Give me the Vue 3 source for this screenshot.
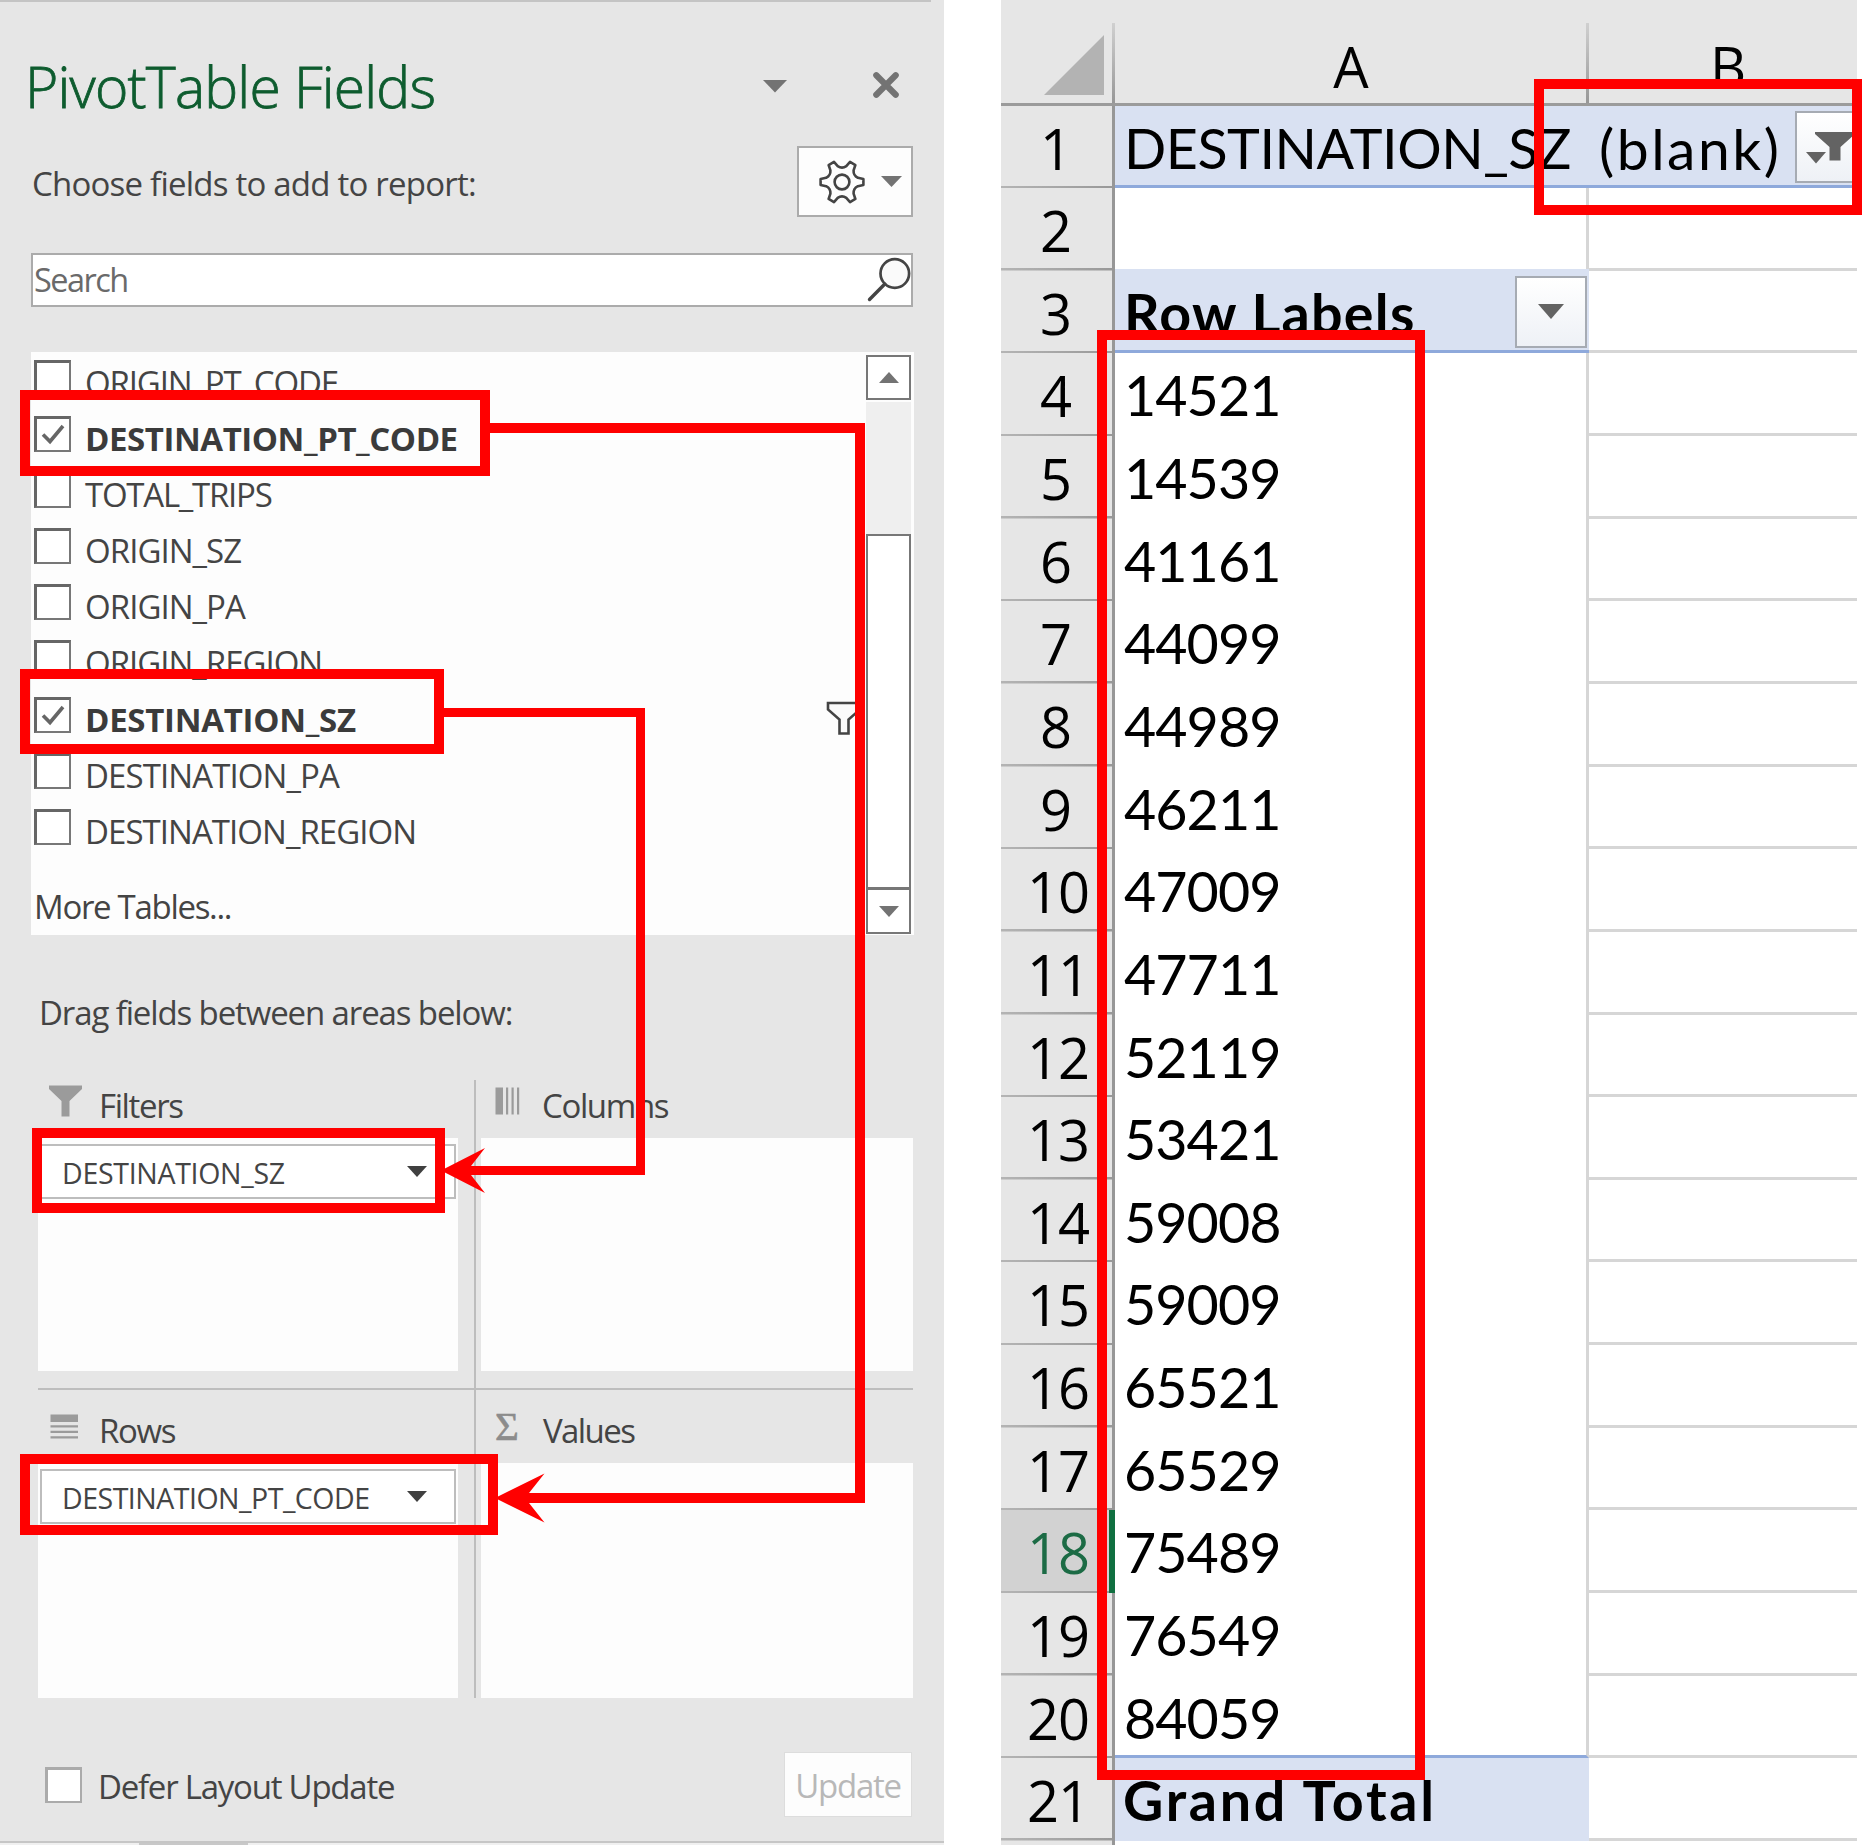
<script setup>
const fields = [
  { name: 'ORIGIN_PT_CODE', tracking: -1.15 },
  { name: 'DESTINATION_PT_CODE', tracking: -0.44, checked: true },
  { name: 'TOTAL_TRIPS', tracking: -1.25 },
  { name: 'ORIGIN_SZ', tracking: -0.95 },
  { name: 'ORIGIN_PA', tracking: -0.95 },
  { name: 'ORIGIN_REGION', tracking: -1 },
  { name: 'DESTINATION_SZ', tracking: -0.28, checked: true, filtered: true },
  { name: 'DESTINATION_PA', tracking: -0.9 },
  { name: 'DESTINATION_REGION', tracking: -0.95 },
]

const areas = [
  { key: 'filters', title: 'Filters', items: ['DESTINATION_SZ'] },
  { key: 'columns', title: 'Columns', items: [] },
  { key: 'rows', title: 'Rows', items: ['DESTINATION_PT_CODE'] },
  { key: 'values', title: 'Values', items: [] },
]

const codes = [
  14521, 14539, 41161, 44099, 44989, 46211, 47009, 47711, 52119,
  53421, 59008, 59009, 65521, 65529, 75489, 76549, 84059,
]

const sheetRows = [
  { n: 1, a: 'DESTINATION_SZ', b: '(blank)', kind: 'page' },
  { n: 2, a: '', kind: 'plain' },
  { n: 3, a: 'Row Labels', kind: 'head' },
  ...codes.map((c, i) => ({ n: i + 4, a: String(c), kind: i === codes.length - 1 ? 'last' : 'code' })),
  { n: 21, a: 'Grand Total', kind: 'total' },
]

// Six-toothed gear outline around the origin
function gearPath() {
  const tooth = [[15.9, -4.2], [21.4, -3.1], [21.4, 3.1], [15.9, 4.2]]
  const v0 = -Math.PI / 6
  const valley = (v) => `${(13 * Math.cos(v)).toFixed(2)} ${(13 * Math.sin(v)).toFixed(2)}`
  let d = ''
  for (let i = 0; i < 6; i++) {
    const t = (i * Math.PI) / 3
    const rot = ([x, y]) =>
      `${(x * Math.cos(t) - y * Math.sin(t)).toFixed(2)} ${(x * Math.sin(t) + y * Math.cos(t)).toFixed(2)}`
    d += i === 0 ? `M${rot(tooth[0])}` : `Q${valley(t + v0)} ${rot(tooth[0])}`
    d += tooth.slice(1).map((p) => `L${rot(p)}`).join('')
  }
  return `${d}Q${valley(v0)} 15.9 -4.2Z`
}
const gear = gearPath()
</script>

<template>
  <main class="stage">
    <aside class="pane">
      <header class="pane-head">
        <h1>PivotTable Fields</h1>
        <svg width="24" height="13" viewBox="0 0 24 13"><path d="M0 0H24L12 12.6Z" fill="#737373" /></svg>
        <svg class="close" width="28" height="28" viewBox="0 0 28 28"><path d="M4.3 4.3L23.7 23.7M23.7 4.3L4.3 23.7" stroke="#737373" stroke-width="6.2" stroke-linecap="round" /></svg>
      </header>

      <div class="choose">
        <span class="choose-text">Choose fields to add to report:</span>
        <button class="tools">
          <svg width="46" height="46" viewBox="-23 -23 46 46" fill="none" stroke="#444" stroke-width="2.6" stroke-linejoin="round"><path :d="gear" /><circle r="7.4" /></svg>
          <svg class="tools-caret" width="21" height="11" viewBox="0 0 21 11"><path d="M0 0H21L10.5 11Z" fill="#737373" /></svg>
        </button>
      </div>

      <div class="search">
        <span>Search</span>
        <svg width="44" height="46" viewBox="0 0 44 46"><circle cx="27.8" cy="17.5" r="14.3" fill="#fafafa" stroke="#444" stroke-width="2.7" /><path d="M17.8 28L2.5 43.5" stroke="#444" stroke-width="3.4" stroke-linecap="round" /></svg>
      </div>

      <section class="list">
        <div class="fields">
          <div v-for="f in fields" :key="f.name" class="field" :class="{ on: f.checked }">
            <span class="box">
              <svg v-if="f.checked" width="24" height="21" viewBox="0 0 24 21"><path d="M2 10.5L9 17.5L22 2" fill="none" stroke="#666" stroke-width="3.6" /></svg>
            </span>
            <span class="name" :style="{ letterSpacing: f.tracking + 'px' }">{{ f.name }}</span>
            <svg v-if="f.filtered" class="funnel" width="36" height="36" viewBox="0 0 36 36"><path d="M2 2H34V8.5L22.5 18.5V32.5H13.5V18.5L2 8.5Z" fill="#fafafa" stroke="#444" stroke-width="2.6" /></svg>
          </div>
          <div class="more">More Tables...</div>
        </div>
        <div class="scroll">
          <span class="sbtn"><svg width="20" height="11" viewBox="0 0 20 11"><path d="M0 11H20L10 0Z" fill="#737373" /></svg></span>
          <span class="track"></span>
          <span class="thumb"></span>
          <span class="sbtn down"><svg width="20" height="11" viewBox="0 0 20 11"><path d="M0 0H20L10 11Z" fill="#737373" /></svg></span>
        </div>
      </section>

      <p class="drag">Drag fields between areas below:</p>

      <section class="areas">
        <div v-for="a in areas" :key="a.key" class="area" :class="a.key">
          <div class="area-head">
            <svg v-if="a.key === 'filters'" width="34" height="34" viewBox="0 0 34 34"><path d="M0 2.5H33V6L20.5 18V33.5H12.5V18L0 6Z" fill="#9b9b9b" /></svg>
            <svg v-else-if="a.key === 'columns'" width="34" height="34" viewBox="0 0 34 34" fill="#9b9b9b"><path d="M.5 4.5H8V31.5H.5Z" /><path d="M11 4.5h2.2v27h-2.2zM16.5 4.5h2.2v27h-2.2zM22 4.5h2.2v27h-2.2z" /></svg>
            <svg v-else-if="a.key === 'rows'" width="34" height="34" viewBox="0 0 34 34" fill="#9b9b9b"><path d="M1.5 6.5h27.5v7.5h-27.5z" /><path d="M1.5 17.2h27.5v2.2h-27.5zM1.5 22.7h27.5v2.2h-27.5zM1.5 28.2h27.5v2.2h-27.5z" /></svg>
            <span v-else class="sigma">Σ</span>
            <span class="area-title">{{ a.title }}</span>
          </div>
          <div class="drop">
            <div v-for="item in a.items" :key="item" class="chip">
              <span>{{ item }}</span>
              <svg width="20" height="11" viewBox="0 0 20 11"><path d="M0 0H20L10 11Z" fill="#404040" /></svg>
            </div>
          </div>
        </div>
      </section>

      <footer class="foot">
        <span class="box light"></span>
        <span class="defer">Defer Layout Update</span>
        <button class="update">Update</button>
      </footer>
      <div class="status"><span></span></div>
    </aside>

    <section class="sheet">
      <div class="cols">
        <div class="corner"><svg width="60" height="60" viewBox="0 0 60 60"><path d="M60 0V60H0Z" fill="#b3b3b3" /></svg></div>
        <div class="col col-a">A</div>
        <div class="col col-b">B</div>
      </div>
      <div v-for="r in sheetRows" :key="r.n" class="row" :class="[r.kind, { active: r.n === 18, single: r.n < 10 }]">
        <div class="num">{{ r.n }}</div>
        <div class="cell a">
          <span>{{ r.a }}</span>
          <i v-if="r.kind === 'head'" class="dd"><svg width="26" height="15" viewBox="0 0 26 15"><path d="M0 0H26L13 15Z" fill="#636363" /></svg></i>
        </div>
        <div class="cell b">
          <span>{{ r.b }}</span>
          <i v-if="r.b" class="dd"><svg width="54" height="34" viewBox="0 0 54 34" fill="#636363"><path d="M9 2H49V4L34.5 17V30.5H23.5V17L9 4Z" /><path d="M0 22H20L10 33.5Z" /></svg></i>
        </div>
      </div>
      <div class="tail"></div>
    </section>

    <!-- Annotations drawn over both panels -->
    <svg class="marks" width="1862" height="1845" viewBox="0 0 1862 1845" fill="none" stroke="#f00" stroke-width="10">
      <rect x="25" y="395" width="460" height="76" />
      <rect x="25" y="674" width="414" height="75" />
      <rect x="37" y="1133" width="403" height="75" />
      <rect x="25" y="1459" width="468" height="71" />
      <rect x="1102" y="335" width="318" height="1440" />
      <rect x="1539" y="84" width="318" height="126" />
      <path d="M485 428H860V1498H525" />
      <path d="M439 712.5H640.5V1170.5H468" stroke-width="9" />
      <path d="M495 1498L544.5 1473.5L529 1493V1503L544.5 1522.5Z" fill="#f00" stroke="none" />
      <path d="M441 1170.5L485 1148L471 1166V1175L485 1193Z" fill="#f00" stroke="none" />
    </svg>
  </main>
</template>

<style>
body {
  margin: 0;
  background: #fff;
}
</style>

<style scoped>
* {
  box-sizing: border-box;
}
svg {
  display: block;
  flex: none;
}
.stage {
  position: relative;
  display: flex;
  gap: 57px;
  width: 1862px;
  height: 1845px;
  overflow: hidden;
  font-family: "Open Sans", "Noto Sans", sans-serif;
  font-size: 33px;
  color: #444;
  white-space: nowrap;
}
.marks {
  position: absolute;
  inset: 0;
}

/* ---- Field pane ---- */
.pane {
  display: flex;
  flex-direction: column;
  width: 944px;
  height: 1845px;
  background: linear-gradient(#c4c4c4, #c4c4c4) 0 0 / 931px 2px no-repeat, #e6e6e6;
}
.pane-head {
  display: flex;
  align-items: center;
  height: 80px;
  margin-top: 46px;
  padding: 0 44px 0 25px;
}
h1 {
  flex: 1;
  margin: 0;
  font-size: 57px;
  font-weight: 300;
  line-height: 82px;
  letter-spacing: -0.82px;
  color: #0e5c2f;
  -webkit-text-stroke: 0.8px #0e5c2f;
}
.close {
  margin-left: 85px;
  margin-top: -2px;
}
.choose {
  display: flex;
  justify-content: space-between;
  height: 71px;
  margin: 20px 31px 0 32px;
}
.choose-text {
  line-height: 75px;
  letter-spacing: -0.78px;
}
.tools {
  display: flex;
  align-items: center;
  width: 116px;
  height: 71px;
  padding: 0 0 0 20px;
  border: 2px solid #ababab;
  background: #fdfdfd;
}
.tools-caret {
  margin-left: 16px;
}
.search {
  display: flex;
  justify-content: space-between;
  height: 54px;
  margin: 36px 31px 0 31px;
  padding-left: 1px;
  border: 2px solid #ababab;
  background: #fff;
  color: #6a6a6a;
  line-height: 50px;
}
.search span {
  font-size: 32.5px;
  letter-spacing: -1.55px;
}
.search svg {
  margin-top: 1px;
}
.list {
  display: flex;
  height: 583px;
  margin: 45px 30px 0 31px;
  padding-right: 3px;
  background: #fdfdfd;
}
.fields {
  flex: 1;
  padding-top: 2px;
}
.field {
  display: flex;
  height: 56.1px;
  padding: 0 4px 0 3px;
  line-height: 57px;
}
.box {
  display: flex;
  align-items: center;
  justify-content: center;
  flex: none;
  width: 37px;
  height: 36px;
  margin: 6px 14px 0 0;
  border: 2px solid #777;
  border-top: 3px solid #666;
  border-left: 3px solid #666;
  background: #fff;
}
.field.on .name {
  font-weight: 700;
  color: #3b3b3b;
}
.funnel {
  margin: 10px 0 0 auto;
}
.more {
  height: 94px;
  padding-left: 3px;
  line-height: 96px;
  letter-spacing: -1.3px;
}
.scroll {
  display: flex;
  flex-direction: column;
  width: 45px;
  padding-top: 3px;
}
.sbtn {
  display: flex;
  align-items: center;
  justify-content: center;
  height: 45px;
  border: 2px solid #777;
  background: #fff;
}
.track {
  height: 132px;
  margin-top: 2px;
  background: #efefef;
}
.thumb {
  height: 355px;
  border: 2px solid #777;
  background: #fff;
}
.sbtn.down {
  height: 46px;
  margin-top: -1px;
}
.drag {
  margin: 53px 0 42px 39px;
  line-height: 50px;
  letter-spacing: -1.12px;
}
.areas {
  display: grid;
  grid-template-columns: 436px 439px;
  grid-template-rows: 308px 310px;
  margin-left: 38px;
}
.area {
  display: flex;
  flex-direction: column;
}
.filters,
.rows {
  padding-right: 16px;
}
.columns,
.values {
  border-left: 2px solid #bdbdbd;
  padding-left: 5px;
}
.rows,
.values {
  border-top: 2px solid #bdbdbd;
}
.area-head {
  display: flex;
  align-items: flex-end;
  height: 58px;
  padding-left: 11px;
}
.rows .area-head,
.values .area-head {
  height: 73px;
}
.columns .area-head,
.values .area-head {
  padding-left: 14px;
}
.area-head svg,
.sigma {
  margin-bottom: 21px;
}
.sigma {
  width: 34px;
  height: 34px;
  font: 41px/36px "Liberation Serif", serif;
  color: #8c8c8c;
  -webkit-text-stroke: 0.6px #8c8c8c;
}
.area-title {
  padding-left: 16px;
  line-height: 64px;
  letter-spacing: -1.37px;
}
.columns .area-title {
  padding-left: 13px;
}
.values .area-title {
  padding-left: 14px;
  letter-spacing: -1.58px;
}
.drop {
  height: 233px;
  padding: 6px 2px;
  background: #fdfdfd;
}
.rows .drop,
.values .drop {
  height: 235px;
}
.chip {
  display: flex;
  align-items: center;
  justify-content: space-between;
  height: 55px;
  padding: 0 27px 0 20px;
  border: 2px solid #bdbdbd;
  background: #fff;
  font-size: 28.5px;
  letter-spacing: -0.5px;
}
.chip span {
  padding-top: 3px;
}
.filters .chip {
  letter-spacing: -0.3px;
}
.foot {
  display: flex;
  align-items: center;
  height: 64px;
  margin: 54px 32px 0 45px;
}
.box.light {
  margin: 2px 15px 0 0;
  border-color: #ababab;
}
.defer {
  flex: 1;
  padding: 5px 0 0 1px;
  letter-spacing: -1.24px;
}
.update {
  width: 128px;
  height: 65px;
  padding: 3px 0 0;
  border: 1px solid #ddd;
  background: #fdfdfd;
  font: inherit;
  letter-spacing: -1.27px;
  color: #b8b8b8;
}
.status {
  height: 4px;
  margin-top: auto;
  border-top: 2px solid #c6c6c6;
  background: #f0f0f0;
}
.status span {
  display: block;
  width: 109px;
  height: 2px;
  margin-left: 139px;
  background: #c8c8c8;
}

/* ---- Worksheet ---- */
.sheet {
  display: flex;
  flex-direction: column;
  width: 856px;
  height: 1845px;
  overflow: hidden;
  font-size: 56px;
  color: #000;
}
.cols {
  display: flex;
  flex: none;
  height: 105.5px;
  border-bottom: 3px solid #9b9b9b;
  background: #e6e6e6;
}
.corner {
  width: 114px;
  padding: 35px 0 0 43px;
  background: linear-gradient(#d0d0d0, #979797) 100% 100% / 3px 80px no-repeat;
}
.col {
  padding-top: 29px;
  line-height: 74px;
  text-align: center;
}
.col-a {
  width: 474px;
  padding-right: 2px;
  background: linear-gradient(#d0d0d0, #979797) 100% 100% / 3px 80px no-repeat;
}
.col-b {
  width: 268px;
  padding-left: 10px;
}
.row {
  display: flex;
  flex: none;
  height: 82.65px;
}
.num {
  width: 114px;
  padding: 0 0 0 3px;
  border-right: 3px solid #979797;
  background: linear-gradient(90deg, #b4b4b4, #999) 0 100% / 100% 2.5px no-repeat, #e6e6e6;
  line-height: 84px;
  letter-spacing: -1px;
  text-align: center;
}
.single .num {
  padding: 0 2px 0 0;
}
.active .num {
  border-right: 6px solid #107040;
  padding-left: 6px;
  background-color: #d2d2d2;
  color: #1c6b45;
}
.cell {
  display: flex;
  font-family: "Lato", "Carlito", sans-serif;
  font-size: 55.6px;
  line-height: 84px;
}
.cell.a {
  width: 474px;
  padding-left: 9px;
  border-right: 3px solid #d6d6d6;
  letter-spacing: -0.95px;
}
.cell.b {
  width: 268px;
  padding-left: 10px;
  border-bottom: 3px solid #d6d6d6;
}
.page .cell {
  border-right: 0;
  border-bottom: 3px solid #8ea9db;
  background: #d9e1f2;
}
.page .a {
  letter-spacing: -0.48px;
}
.page .b {
  font-size: 57px;
  letter-spacing: 2.5px;
}
.head .a,
.total .a {
  border-right: 0;
  background: #d9e1f2;
  font-weight: 700;
}
.head .a {
  border-bottom: 3px solid #8ea9db;
  box-shadow: 0 -2px 0 #d9e1f2;
  letter-spacing: 1.27px;
}
.total .a {
  padding-left: 8px;
  letter-spacing: 2.7px;
}
.last .a {
  border-bottom: 3px solid #8ea9db;
}
.dd {
  display: flex;
  align-items: center;
  justify-content: center;
  flex: none;
  width: 72px;
  height: 72px;
  margin: 5px 2px 0 auto;
  border: 2px solid #a6abb3;
  background: linear-gradient(#fff, #eef1f6);
}
.page .dd {
  justify-content: flex-start;
  padding-left: 9px;
  margin-right: -10px;
}
.tail {
  flex: 1;
  background: linear-gradient(90deg, #e6e6e6 111px, #979797 111px, #979797 114px, #fff 114px);
}
</style>
